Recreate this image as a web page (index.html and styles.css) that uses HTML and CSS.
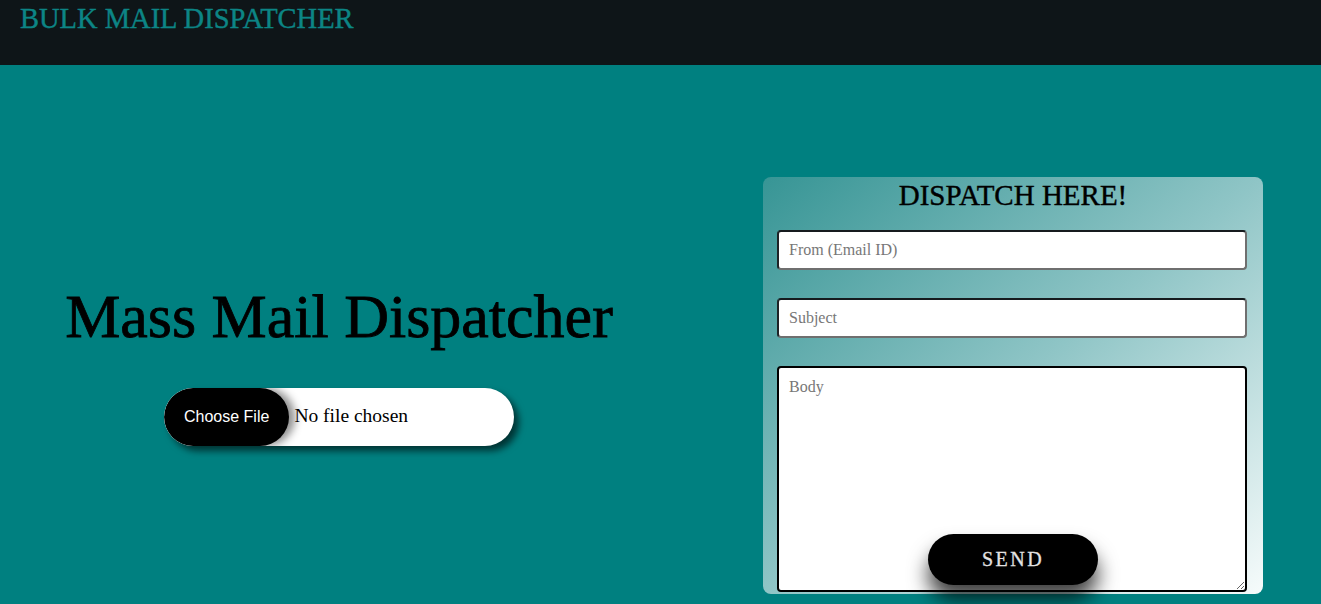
FILE: index.html
```html
<!DOCTYPE html>
<html lang="en">
<head>
<meta charset="utf-8">
<title>Bulk Mail Dispatcher</title>
<link rel="stylesheet" href="styles.css">
</head>
<body>
<nav class="navbar">
  <span class="brand">BULK MAIL DISPATCHER</span>
</nav>
<main class="main">
  <section class="left">
    <h1 class="title">Mass Mail Dispatcher</h1>
    <input class="file" type="file">
  </section>
  <section class="right">
    <form class="card">
      <h2 class="card-title">DISPATCH HERE!</h2>
      <input class="field" type="text" placeholder="From (Email ID)">
      <input class="field" type="text" placeholder="Subject">
      <textarea class="field area" placeholder="Body"></textarea>
      <button class="send" type="button">SEND</button>
    </form>
  </section>
</main>
</body>
</html>
```
FILE: styles.css
```css
* { box-sizing: border-box; }
html, body { margin: 0; padding: 0; height: 100%; }
body {
  background: #008080;
  font-family: "Liberation Serif", "Times New Roman", serif;
  overflow: hidden;
}
.navbar {
  height: 65px;
  background: #0e1518;
  padding: 3px 20px 0;
}
.brand {
  color: #0c8585;
  font-size: 28.5px;
  line-height: 1.15;
  -webkit-text-stroke: 0.4px #0c8585;
}
.main {
  display: flex;
  height: 539px;
}
.left {
  width: 678px;
  display: flex;
  flex-direction: column;
  align-items: center;
  padding-top: 216px;
}
.title {
  margin: 0;
  font-weight: normal;
  font-size: 62px;
  line-height: 1.15;
  color: #000;
  -webkit-text-stroke: 0.8px #000;
}
.file {
  margin-top: 36px;
  width: 350px;
  height: 58px;
  background: #fff;
  border-radius: 29px;
  padding: 0;
  font-family: "Liberation Serif", serif;
  font-size: 19.5px;
  color: #000;
  box-shadow: 5px 5px 7px rgba(0, 0, 0, 0.6);
}
.file::file-selector-button {
  height: 58px;
  padding: 0 20px;
  margin: 0 5px 0 0;
  border: none;
  border-radius: 29px;
  background: #000;
  color: #fff;
  font-family: "Liberation Sans", Arial, sans-serif;
  font-size: 16px;
  box-shadow: 6px 0 8px rgba(0, 0, 0, 0.45);
  cursor: pointer;
}
.right {
  padding-left: 85px;
  padding-top: 112px;
}
.card {
  width: 500px;
  border-radius: 8px;
  padding: 3px 14px 9px;
  background: linear-gradient(to bottom right, #379595 0%, #8fc5c6 50%, #f6fbfb 100%);
  display: flex;
  flex-direction: column;
}
.card-title {
  margin: 0 0 18px;
  text-align: center;
  font-weight: normal;
  font-size: 29px;
  line-height: 1.1;
  color: #000;
  -webkit-text-stroke: 0.4px #000;
}
.field {
  width: 470px;
  height: 40px;
  margin: 0 0 28px;
  padding: 0 10px;
  border-width: 2px;
  border-style: solid;
  border-color: #161b1e #6f6f6f #6f6f6f #1e2326;
  border-radius: 4px;
  background: #fff;
  font-family: "Liberation Serif", serif;
  font-size: 16px;
  color: #000;
  outline: none;
}
.field::placeholder { color: #777; }
.area {
  height: 226px;
  margin: 0;
  padding: 10px;
  border-color: #000;
  resize: vertical;
}
.send {
  align-self: center;
  position: relative;
  margin-top: -58px;
  width: 170px;
  height: 51px;
  border: none;
  border-radius: 26px;
  background: #000;
  color: #e2e2e2;
  font-family: "Liberation Serif", serif;
  font-size: 20px;
  letter-spacing: 2.5px;
  -webkit-text-stroke: 0.3px #e2e2e2;
  box-shadow: 0 15px 20px rgba(0, 0, 0, 0.75);
  cursor: pointer;
}
```
